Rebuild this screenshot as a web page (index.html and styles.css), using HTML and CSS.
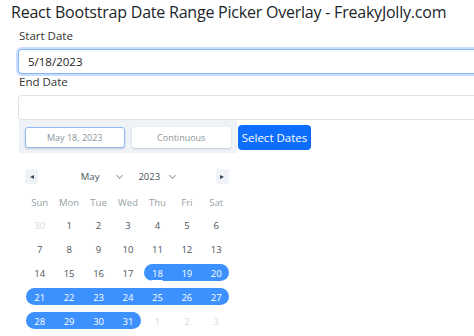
FILE: index.html
```html
<!DOCTYPE HTML>
<html>
	<head>
		<title>React Bootstrap Date Range Picker Overlay</title>
		<meta charset="utf-8">
		<link rel="stylesheet" href="styles.css">
	</head>
	<body>
		<div class="page">
			<h1 class="title">React Bootstrap Date Range Picker Overlay - FreakyJolly.com</h1>

			<div class="form">
				<label class="label">Start Date</label>
				<div class="input focus">5/18/2023</div>

				<label class="label end">End Date</label>
				<div class="input"></div>
			</div>

			<div class="range-box">
				<div class="cal">
					<div class="display">
						<div class="display-item active">May 18, 2023</div>
						<div class="display-item">Continuous</div>
					</div>

					<div class="nav">
						<span class="nav-btn"><i class="tri left"></i></span>
						<div class="pickers">
							<span class="select month">May <b class="chev"></b></span>
							<span class="select year">2023 <b class="chev"></b></span>
						</div>
						<span class="nav-btn"><i class="tri right"></i></span>
					</div>

					<div class="week">
						<span>Sun</span><span>Mon</span><span>Tue</span><span>Wed</span><span>Thu</span><span>Fri</span><span>Sat</span>
					</div>

					<div class="days">
						<div class="day passive"><span class="num">30</span></div>
						<div class="day"><span class="num">1</span></div>
						<div class="day"><span class="num">2</span></div>
						<div class="day"><span class="num">3</span></div>
						<div class="day"><span class="num">4</span></div>
						<div class="day"><span class="num">5</span></div>
						<div class="day"><span class="num">6</span></div>

						<div class="day"><span class="num">7</span></div>
						<div class="day"><span class="num">8</span></div>
						<div class="day"><span class="num">9</span></div>
						<div class="day"><span class="num">10</span></div>
						<div class="day"><span class="num">11</span></div>
						<div class="day"><span class="num">12</span></div>
						<div class="day"><span class="num">13</span></div>

						<div class="day"><span class="num">14</span></div>
						<div class="day"><span class="num">15</span></div>
						<div class="day"><span class="num">16</span></div>
						<div class="day"><span class="num">17</span></div>
						<div class="day in first"><span class="num today">18</span></div>
						<div class="day in"><span class="num">19</span></div>
						<div class="day in last"><span class="num">20</span></div>

						<div class="day in first"><span class="num">21</span></div>
						<div class="day in"><span class="num">22</span></div>
						<div class="day in"><span class="num">23</span></div>
						<div class="day in"><span class="num">24</span></div>
						<div class="day in"><span class="num">25</span></div>
						<div class="day in"><span class="num">26</span></div>
						<div class="day in last"><span class="num">27</span></div>

						<div class="day in first"><span class="num">28</span></div>
						<div class="day in"><span class="num">29</span></div>
						<div class="day in"><span class="num">30</span></div>
						<div class="day in last"><span class="num">31</span></div>
						<div class="day passive"><span class="num">1</span></div>
						<div class="day passive"><span class="num">2</span></div>
						<div class="day passive"><span class="num">3</span></div>
					</div>
				</div>

				<button class="btn">Select Dates</button>
			</div>
		</div>
	</body>
</html>
```

FILE: styles.css
```css
*{ margin:0; padding:0; box-sizing:border-box;}
body{
	background:#fff;
	font-family:"Open Sans","Noto Sans",sans-serif;
	color:#212529;
}
.page{
	padding:1px 0 0 11px;
}
.title{
	font-size:16px;
	font-weight:500;
	line-height:22px;
	letter-spacing:-0.22px;
	white-space:nowrap;
	color:#212529;
}
.form{
	padding-left:7px;
}
.label{
	display:block;
	font-size:11.5px;
	line-height:15px;
	margin:5px 0 6px 1px;
	color:#333;
}
.label.end{
	margin-top:0;
}
/* the inputs run on past the right edge of the shot */
.input{
	height:25px;
	border:1px solid #dee2e6;
	border-right:none;
	border-radius:4px 0 0 4px;
	font-size:11.5px;
	line-height:23px;
	padding-left:9px;
	color:#222;
}
.input.focus{
	border-color:#86b7fe;
	box-shadow:0 0 0 2px rgba(13,110,253,0.22);
}

/* date range dropdown under the end date field */
.range-box{
	margin-left:8px;
	display:flex;
	align-items:flex-start;
	gap:1px;
}
.cal{
	width:218px;
	background:#fff;
	padding-bottom:6px;
}
.display{
	background:#eff2f7;
	display:flex;
	gap:7px;
	padding:7px 6px 5px 6px;
	height:33px;
}
.display-item{
	width:100px;
	height:21px;
	background:#fff;
	border-radius:3px;
	box-shadow:0 1px 2px rgba(35,57,66,0.21);
	font-size:9px;
	line-height:20px;
	text-align:center;
	color:#8a9499;
	border:1px solid transparent;
}
.display-item.active{
	border-color:#8fb9f5;
}
.nav{
	display:flex;
	align-items:center;
	justify-content:space-between;
	padding:16px 8px 0 6px;
	height:31px;
}
.nav-btn{
	width:13px;
	height:15px;
	background:#eff2f7;
	border-radius:3px;
	display:flex;
	align-items:center;
	justify-content:center;
}
.tri{
	width:0;
	height:0;
	border-top:2.5px solid transparent;
	border-bottom:2.5px solid transparent;
}
.tri.left{ border-right:4px solid #34495e;}
.tri.right{ border-left:4px solid #34495e;}
.pickers{
	display:flex;
	gap:16px;
	font-size:9.5px;
	color:#4a5358;
	margin-left:2px;
}
.select{
	display:flex;
	align-items:center;
}
.month{ gap:18px;}
.year{ gap:10px;}
.chev{
	width:5px;
	height:5px;
	border-right:1px solid #9aa3a8;
	border-bottom:1px solid #9aa3a8;
	transform:rotate(45deg);
	margin-top:-3px;
}
.week, .days{
	display:grid;
	grid-template-columns:repeat(7, 1fr);
	margin:0 6px;
}
.week{
	height:29px;
	padding-top:8px;
}
.week span{
	text-align:center;
	font-size:9.5px;
	line-height:21px;
	color:#959fa4;
}
.days{
	grid-auto-rows:24px;
}
.day{
	display:flex;
	align-items:center;
	justify-content:center;
	font-size:9.5px;
	color:#4a5358;
}
.day.passive{ color:#d5dce0;}
.day.in{
	position:relative;
	color:#fff;
}
.day.in::before{
	content:"";
	position:absolute;
	left:0;
	right:0;
	top:3px;
	height:17px;
	background:#3d91ff;
}
.day.first::before{
	left:1px;
	border-radius:9px 0 0 9px;
}
.day.last::before{
	right:2px;
	border-radius:0 9px 9px 0;
}
.num{
	position:relative;
}
.num.today::after{
	content:"";
	position:absolute;
	left:50%;
	bottom:-2px;
	width:12px;
	margin-left:-6px;
	height:2px;
	background:#fff;
	border-radius:2px;
}
.btn{
	margin-top:5px;
	width:73px;
	height:25px;
	border:none;
	border-radius:4px;
	background:#0d6efd;
	color:#fff;
	font-family:"Open Sans","Noto Sans",sans-serif;
	font-size:11.5px;
}
```
